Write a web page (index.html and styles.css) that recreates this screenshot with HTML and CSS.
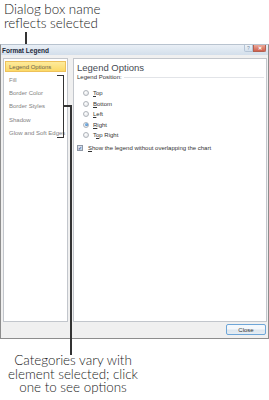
FILE: index.html
```html
<!DOCTYPE html>
<html>
<head>
<meta charset="utf-8">
<link rel="stylesheet" href="styles.css">
</head>
<body>
<div class="page">
  <div class="note note-top">Dialog box name<br>reflects selected</div>
  <div class="pointer-top"></div>
  <div class="dialog">
    <div class="titlebar">
      <span class="title">Format Legend</span>
      <div class="tb-buttons">
        <span class="tb-help">?</span>
        <span class="tb-close">&#x2715;</span>
      </div>
    </div>
    <div class="content">
      <ul class="cats">
        <li class="cat selected">Legend Options</li>
        <li class="cat">Fill</li>
        <li class="cat">Border Color</li>
        <li class="cat">Border Styles</li>
        <li class="cat">Shadow</li>
        <li class="cat">Glow and Soft Edges</li>
      </ul>
      <div class="pane">
        <div class="pane-title">Legend Options</div>
        <div class="group-head"><span>Legend Position:</span><span class="rule"></span></div>
        <div class="radios">
          <label class="radio"><span class="dot"></span><span><u>T</u>op</span></label>
          <label class="radio"><span class="dot"></span><span><u>B</u>ottom</span></label>
          <label class="radio"><span class="dot"></span><span><u>L</u>eft</span></label>
          <label class="radio on"><span class="dot"></span><span><u>R</u>ight</span></label>
          <label class="radio"><span class="dot"></span><span>T<u>o</u>p Right</span></label>
        </div>
        <label class="check"><span class="box">&#x2713;</span><span><u>S</u>how the legend without overlapping the chart</span></label>
      </div>
    </div>
    <div class="footer"><button class="close-btn">Close</button></div>
  </div>
  <div class="note note-bottom"><div>Categories vary with</div><div>element selected; click</div><div>one to see options</div></div>
  <div class="bracket"></div>
  <div class="connector"></div>
  <div class="leader"></div>
</div>
</body>
</html>
```
FILE: styles.css
```css
* { box-sizing: border-box; }
html, body { margin: 0; padding: 0; background: #fff; }
body { width: 269px; height: 400px; overflow: hidden; }
.page { position: relative; width: 269px; }

.note {
  font-family: Lato, "Open Sans", sans-serif;
  font-weight: 300;
  font-size: 13.4px;
  line-height: 14px;
  color: #1a1a1a;
}
.note-top { padding: 2px 0 0 4px; height: 32px; }
.pointer-top { width: 2px; height: 12px; margin-left: 25px; background: #333; }

.dialog {
  width: 269px;
  border: 1px solid #8d8d8d;
  border-top-color: #b8c3cf;
  background: #f0f0f0;
  font-family: "Liberation Sans", Arial, sans-serif;
  font-size: 6px;
  color: #444;
}
.titlebar {
  height: 10px;
  display: flex;
  align-items: center;
  justify-content: space-between;
  background: linear-gradient(#e9eff6, #d3dfeb);
}
.title { font-weight: bold; font-size: 6.5px; color: #1e2a3a; padding-left: 1px; }
.tb-buttons { display: flex; align-self: flex-start; margin-right: 2px; }
.tb-help, .tb-close {
  height: 7px;
  display: flex; align-items: center; justify-content: center;
  font-size: 5px; line-height: 1;
  border: 1px solid #b4c4d6;
  border-top: none;
}
.tb-help { width: 9px; background: linear-gradient(#eef3f9, #d4e0ec); color: #7a8ca4; border-radius: 0 0 0 2px; }
.tb-close { width: 13px; background: linear-gradient(#eba99a, #d0604c); color: #fff; border-color: #b36050; border-radius: 0 0 2px 0; font-weight: bold; }

.content { display: flex; gap: 5px; padding: 3px 1px 0 2px; }
.cats {
  list-style: none; margin: 0;
  width: 65px; height: 264px;
  padding: 1.5px 1px 0 1px;
  background: #fff;
  border: 1px solid #c2c6cc;
}
.cat {
  height: 11px; line-height: 11px;
  margin-bottom: 2.3px;
  padding-left: 3px;
  color: #828282;
  white-space: nowrap;
  border: 1px solid transparent;
}
.cat.selected {
  background: linear-gradient(#fdeb9c, #fbd967);
  border-color: #eec15a;
  color: #6a6450;
}
.pane {
  flex: 1; height: 264px;
  background: #fff;
  border: 1px solid #c2c6cc;
  padding: 3px 2px 0 3px;
}
.pane-title { font-size: 9.5px; line-height: 11px; color: #454a52; }
.group-head { display: flex; align-items: center; gap: 2px; margin-top: 1px; color: #333; }
.group-head .rule { flex: 1; height: 1px; background: #e2e4e8; }
.radios { display: flex; flex-direction: column; padding: 8px 0 0 6px; }
.radio { display: flex; align-items: center; gap: 4px; height: 10.5px; color: #333; }
.dot {
  width: 6px; height: 6px; border-radius: 50%;
  border: 1px solid #b0b4ba;
  background: radial-gradient(circle at 40% 35%, #fff, #dcdfe3);
  display: flex; align-items: center; justify-content: center;
}
.radio.on .dot::after {
  content: ""; width: 3px; height: 3px; border-radius: 50%;
  background: radial-gradient(circle at 40% 35%, #8ec3f0, #2a6fb6);
}
.check { display: flex; align-items: center; gap: 5px; margin-top: 2px; height: 10px; color: #333; }
.box {
  width: 6px; height: 6px;
  border: 1px solid #8f98a6;
  background: linear-gradient(#dfe6f0, #c6d2e2);
  color: #3a5aa0; font-size: 5px; line-height: 4px; text-align: center; font-weight: bold;
}

.footer { display: flex; justify-content: flex-end; padding: 2px 2px 3px 0; }
.close-btn {
  width: 40px; height: 11px; padding: 0;
  font-family: "Liberation Sans", Arial, sans-serif; font-size: 6px; color: #333;
  border: 1px solid #6ea6d8; border-radius: 2px;
  background: linear-gradient(#f4f8fc 45%, #dde6ee 55%, #e6edf3);
}

.note-bottom { width: 146px; margin-top: 15px; text-align: center; line-height: 13.5px; }

.bracket {
  position: absolute; left: 57px; top: 75px;
  width: 7px; height: 63px;
  border: 1.5px solid #333; border-left: none;
}
.connector { position: absolute; left: 64px; top: 105px; width: 7px; height: 1.5px; background: #333; }
.leader { position: absolute; left: 70px; top: 105px; width: 1.6px; height: 250px; background: #333; }
```
